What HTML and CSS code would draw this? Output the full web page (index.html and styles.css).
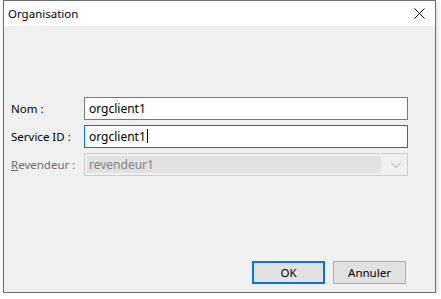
FILE: index.html
```html
<!DOCTYPE html>
<html lang="fr">
<head>
    <meta charset="UTF-8">
    <title>Organisation</title>
    <link rel="stylesheet" href="styles.css">
</head>
<body>

    <div class="window">
        <div class="titlebar">
            <span class="title">Organisation</span>
            <!-- close button -->
            <svg class="close" width="11" height="11" viewBox="0 0 11 11">
                <path d="M0.5 0.5 L10.5 10.5 M10.5 0.5 L0.5 10.5" stroke="#000" stroke-width="1" fill="none"/>
            </svg>
        </div>

        <div class="content">
            <div class="form">
                <label class="label">Nom :</label>
                <div class="field">orgclient1</div>

                <label class="label">Service ID :</label>
                <div class="field focused">orgclient1<span class="caret"></span></div>

                <label class="label disabled"><u>R</u>evendeur :</label>
                <div class="combo">
                    <div class="combo-text">revendeur1</div>
                    <svg class="chevron" width="12" height="8" viewBox="0 0 12 8">
                        <path d="M1 1.5 L6 6.5 L11 1.5" stroke="#a8a8a8" stroke-width="1" fill="none"/>
                    </svg>
                </div>
            </div>

            <div class="buttons">
                <button class="btn default">OK</button>
                <button class="btn">Annuler</button>
            </div>
        </div>
    </div>

</body>
</html>
```

FILE: styles.css
```css
body {
    margin: 0;
    background: #ffffff;
    font-family: "Noto Sans", "Open Sans", Arial, sans-serif;
    font-size: 11.5px;
    color: #000;
}
.window {
    margin-left: 3px;
    width: 431px;
    height: 291px;
    border: 1px solid #6f6f6f;
    display: flex;
    flex-direction: column;
    box-shadow: 1px 2px 5px rgba(0, 0, 0, 0.18);
}
.titlebar {
    height: 25px;
    background: #ffffff;
    display: flex;
    align-items: center;
    justify-content: space-between;
    padding: 0 10px 0 4px;
}
.title {
    font-size: 11.5px;
    margin-top: -1px;
}
.close {
    margin-top: -1px;
}
.content {
    flex: 1;
    background: #f0f0f0;
    display: flex;
    flex-direction: column;
    justify-content: space-between;
    padding: 71px 29px 8px 7px;
}
.form {
    display: grid;
    grid-template-columns: 73px 324px;
    row-gap: 5px;
    align-items: center;
}
.label {
    line-height: 23px;
}
.label.disabled {
    color: #6d6d6d;
}
.field {
    height: 19px;
    border: 1px solid #7a7a7a;
    background: #ffffff;
    padding: 1px 4px 1px 4px;
    line-height: 19px;
    font-size: 12px;
}
.field.focused {
    border-color: #0078d7;
}
.caret {
    display: inline-block;
    width: 1px;
    height: 14px;
    background: #000;
    vertical-align: -2px;
    margin-left: 1px;
}
.combo {
    height: 21px;
    border: 1px solid #cccccc;
    background: #f0f0f0;
    display: flex;
    align-items: center;
    padding: 0 5px 0 2px;
}
.combo-text {
    flex: 1;
    height: 17px;
    background: #e1e1e1;
    color: #838383;
    line-height: 17px;
    padding-left: 2px;
    font-size: 12px;
    margin-right: 9px;
}
.chevron {
    margin-top: 1px;
}
.buttons {
    display: flex;
    justify-content: flex-end;
    gap: 8px;
}
.btn {
    width: 73px;
    height: 23px;
    background: #e1e1e1;
    border: 1px solid #adadad;
    font-family: "Noto Sans", "Open Sans", Arial, sans-serif;
    font-size: 11.5px;
    color: #000;
    padding: 0;
}
.btn.default {
    border: 2px solid #0078d7;
}
```
